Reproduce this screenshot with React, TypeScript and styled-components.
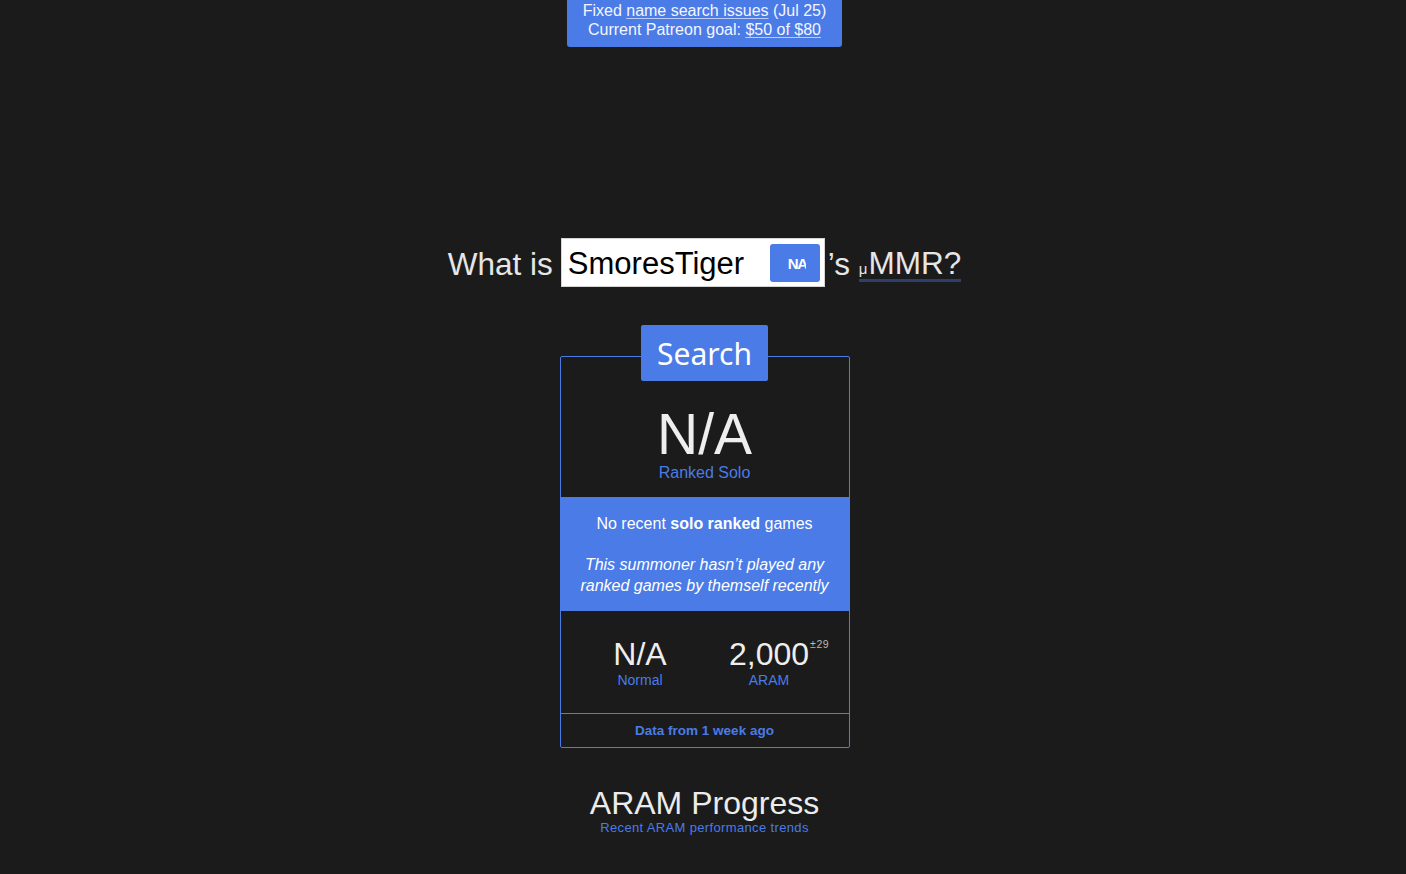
import React from "react";
import styled, { createGlobalStyle } from "styled-components";

const BLUE = "#4a7be7";
const BG = "#1b1b1b";

const Global = createGlobalStyle`
  html, body {
    margin: 0;
    padding: 0;
    background: ${BG};
  }
  body {
    font-family: "Liberation Sans", Arial, sans-serif;
    color: #e8e8e8;
  }
  * { box-sizing: border-box; }
`;

const Page = styled.div`
  display: flex;
  flex-direction: column;
  align-items: center;
  min-height: 874px;
  padding-left: 3px;
`;

const Banner = styled.div`
  width: 275px;
  background: ${BLUE};
  color: #f4f6ff;
  font-size: 16px;
  line-height: 19px;
  text-align: center;
  padding: 1px 0 8px;
  border-radius: 0 0 3px 3px;
`;

const BannerLink = styled.a`
  color: #f4f6ff;
  text-decoration: underline;
  text-decoration-color: #b9cdf7;
  text-underline-offset: 2px;
`;

const Heading = styled.div`
  margin-top: 191px;
  display: flex;
  align-items: center;
  height: 49px;
  font-size: 31.5px;
  color: #e6e6e6;
`;

const Word = styled.span`
  white-space: pre;
  padding-top: 3px;
`;

const NameBox = styled.div`
  margin: 0 3px 0 8px;
  width: 264px;
  height: 49px;
  background: #fff;
  border: 1px solid #d4d4d4;
  display: flex;
  align-items: center;
  padding: 0 4px 0 6px;
`;

const NameText = styled.span`
  flex: 1;
  color: #000;
  font-size: 31px;
  padding-top: 3px;
`;

const Region = styled.div`
  width: 50px;
  height: 38px;
  background: ${BLUE};
  border-radius: 3px;
  display: flex;
  align-items: center;
  padding-left: 18px;
`;

const RegionText = styled.span`
  display: block;
  width: 18px;
  overflow: hidden;
  white-space: nowrap;
  color: #fff;
  font-weight: bold;
  font-size: 15px;
  letter-spacing: -1.5px;
  padding-top: 1px;
`;

const Mmr = styled.span`
  display: inline-block;
  line-height: 1;
  border-bottom: 3px solid #2e3f6e;
  margin-top: 5px;
`;

const Mu = styled.span`
  font-size: 15px;
  margin-right: 1px;
`;

const SearchButton = styled.div`
  position: relative;
  z-index: 1;
  margin-top: 38px;
  height: 56px;
  width: 127px;
  background: ${BLUE};
  color: #fff;
  font-family: "Noto Sans", sans-serif;
  font-size: 30px;
  line-height: 58px;
  text-align: center;
  border-radius: 2px;
`;

const Card = styled.div`
  margin-top: -25px;
  width: 290px;
  border: 1px solid ${BLUE};
  border-radius: 2px;
`;

const Top = styled.div`
  padding: 49px 0 14px;
  text-align: center;
`;

const BigValue = styled.div`
  font-size: 57px;
  line-height: 1;
  color: #eeeeee;
`;

const Label = styled.div<{ $size: number; $lh: number }>`
  color: ${BLUE};
  font-size: ${(p) => p.$size}px;
  line-height: ${(p) => p.$lh}px;
`;

const Notice = styled.div`
  background: ${BLUE};
  color: #fff;
  font-size: 16px;
  line-height: 21px;
  text-align: center;
  padding: 16px 10px 15px;
  p {
    margin: 0;
  }
  p + p {
    margin-top: 20px;
    font-style: italic;
  }
`;

const Stats = styled.div`
  display: grid;
  grid-template-columns: 129px 129px;
  justify-content: center;
  padding: 25px 0 25px;
  text-align: center;
`;

const Stat = styled.div`
  display: flex;
  flex-direction: column;
  align-items: center;
`;

const Value = styled.div`
  position: relative;
  font-size: 32px;
  line-height: 36px;
  color: #eeeeee;
`;

const Sup = styled.span`
  position: absolute;
  left: 100%;
  top: 3px;
  margin-left: 1px;
  font-size: 10.5px;
  line-height: 10px;
  letter-spacing: 0.6px;
  color: #b8b8b8;
`;

const Footer = styled.div`
  border-top: 1px solid ${BLUE};
  height: 34px;
  line-height: 34px;
  text-align: center;
  color: ${BLUE};
  font-weight: bold;
  font-size: 13.5px;
`;

const Section = styled.div`
  margin-top: 37px;
  text-align: center;
`;

const SectionTitle = styled.div`
  font-size: 32px;
  line-height: 36px;
  color: #ececec;
`;

const SectionSub = styled.div`
  margin-top: -1px;
  font-size: 13px;
  line-height: 15px;
  letter-spacing: 0.35px;
  color: ${BLUE};
`;

export default function App() {
  return (
    <>
      <Global />
      <Page>
        <Banner>
          <div>
            Fixed <BannerLink href="#">name search issues</BannerLink> (Jul 25)
          </div>
          <div>
            Current Patreon goal: <BannerLink href="#">$50 of $80</BannerLink>
          </div>
        </Banner>

        <Heading>
          <Word>What is</Word>
          <NameBox>
            <NameText>SmoresTiger</NameText>
            <Region>
              <RegionText>NA</RegionText>
            </Region>
          </NameBox>
          <Word>’s </Word>
          <Mmr>
            <Mu>μ</Mu>MMR?
          </Mmr>
        </Heading>

        <SearchButton>Search</SearchButton>

        <Card>
          <Top>
            <BigValue>N/A</BigValue>
            <Label $size={16} $lh={20}>
              Ranked Solo
            </Label>
          </Top>
          <Notice>
            <p>
              No recent <b>solo ranked</b> games
            </p>
            <p>
              This summoner hasn’t played any
              <br />
              ranked games by themself recently
            </p>
          </Notice>
          <Stats>
            <Stat>
              <Value>N/A</Value>
              <Label $size={14} $lh={16}>
                Normal
              </Label>
            </Stat>
            <Stat>
              <Value>
                2,000<Sup>±29</Sup>
              </Value>
              <Label $size={14} $lh={16}>
                ARAM
              </Label>
            </Stat>
          </Stats>
          <Footer>Data from 1 week ago</Footer>
        </Card>

        <Section>
          <SectionTitle>ARAM Progress</SectionTitle>
          <SectionSub>Recent ARAM performance trends</SectionSub>
        </Section>
      </Page>
    </>
  );
}
